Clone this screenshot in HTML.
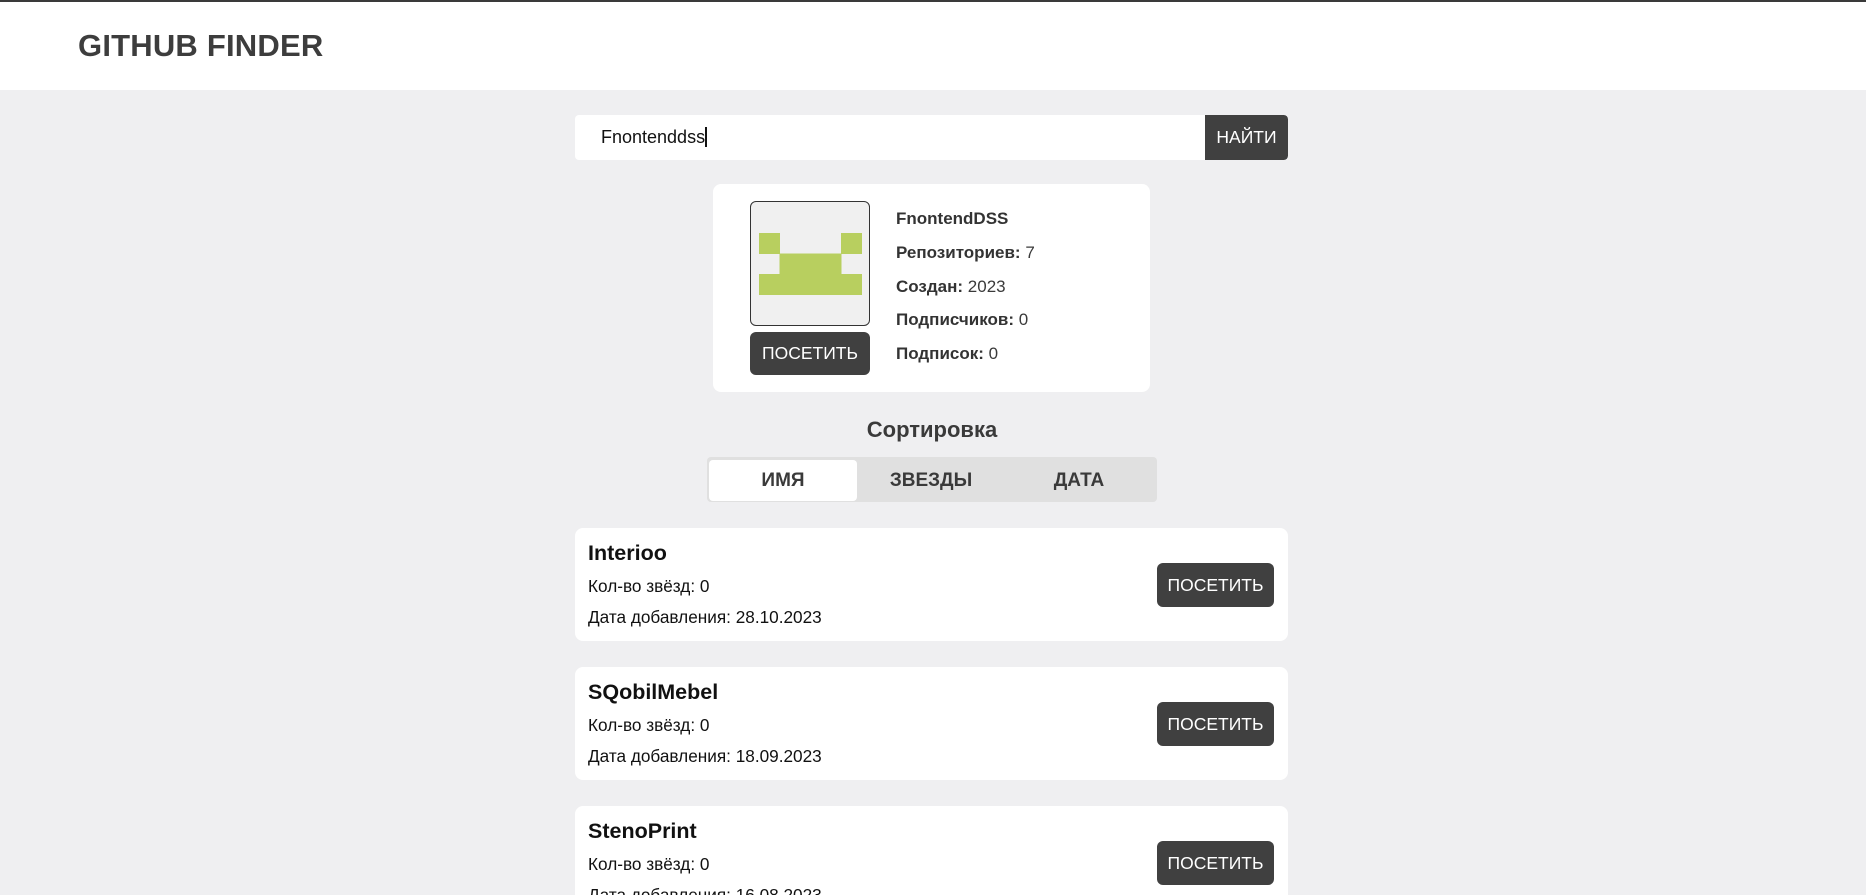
<!DOCTYPE html>
<html style="overflow:hidden;height:895px"><head><meta charset="utf-8"><style>
*{box-sizing:border-box;margin:0;padding:0}
body{width:1866px;height:895px;overflow:hidden;background:#efeff1;font-family:"Liberation Sans",Arial,sans-serif;color:#111;position:relative}
.hdr{position:absolute;left:0;top:0;width:1866px;height:90px;background:#fff;border-top:2px solid #3a3a3a}
.hdr h1{position:absolute;left:78px;top:26px;font-size:31px;font-weight:bold;color:#3d3d3d;letter-spacing:0.2px}
.abs{position:absolute}
.search{left:575px;top:115px;width:713px;height:45px;background:#fff;border-radius:4px;overflow:hidden}
.search .t{position:absolute;left:26px;top:12px;font-size:18px;color:#111}
.search .cur{display:inline-block;width:2px;height:20px;background:#111;vertical-align:-4px}
.search .b{position:absolute;right:0;top:0;width:83px;height:45px;background:#404040;color:#fff;font-size:17.5px;text-align:center;line-height:45px;border-radius:0 4px 4px 0}
.card{background:#fff;border-radius:8px}
.btn{background:#404040;color:#fff;border-radius:6px;text-align:center;font-size:17.5px}
.info{font-size:17px;color:#3a3a3a;position:absolute;left:896px}
.info b{color:#333}
.tabs{left:707px;top:457px;width:450px;height:45px;background:#e0e0e0;border-radius:4px}
.tab{position:absolute;top:3px;width:148px;height:41px;line-height:41px;text-align:center;font-weight:bold;font-size:19px;color:#3a3a3a}
.repo h2{position:absolute;left:13px;top:13px;font-size:21.5px;font-weight:bold;color:#111}
.repo .l{position:absolute;left:13px;font-size:17.2px;color:#111}
.repo .btn{position:absolute;left:582px;top:35px;width:117px;height:44px;line-height:44px}
</style></head><body>
<div class="hdr"><h1>GITHUB FINDER</h1></div>
<div class="abs search"><div class="t">Fnontenddss<span class="cur"></span></div><div class="b">НАЙТИ</div></div>
<div class="abs card" style="left:713px;top:184px;width:437px;height:208px"></div>
<div class="abs" style="left:750px;top:201px;width:120px;height:125px;border:1px solid #333;border-radius:6px;background:#f0f0f0;overflow:hidden">
<svg width="120" height="125" style="position:absolute;left:-1px;top:-1px"><g fill="#b8cf5f">
<rect x="9" y="32" width="21" height="21"/><rect x="91" y="32" width="21" height="21"/>
<rect x="29.5" y="52.5" width="62" height="21"/><rect x="9" y="73" width="103" height="21"/></g></svg></div>
<div class="abs btn" style="left:750px;top:332px;width:120px;height:43px;line-height:43px">ПОСЕТИТЬ</div>
<div class="info" style="top:209px"><b>FnontendDSS</b></div>
<div class="info" style="top:243px"><b>Репозиториев:</b> 7</div>
<div class="info" style="top:277px"><b>Создан:</b> 2023</div>
<div class="info" style="top:310px"><b>Подписчиков:</b> 0</div>
<div class="info" style="top:344px"><b>Подписок:</b> 0</div>
<div class="abs" style="left:707px;width:450px;top:417px;text-align:center;font-weight:bold;font-size:22px;color:#3a3a3a">Сортировка</div>
<div class="abs tabs">
<div class="tab" style="left:2px;background:#fff;border-radius:4px">ИМЯ</div>
<div class="tab" style="left:150px">ЗВЕЗДЫ</div>
<div class="tab" style="left:298px">ДАТА</div></div>
<div class="abs card repo" style="left:575px;top:528px;width:713px;height:113px"><h2>Interioo</h2><div class="l" style="top:48px">Кол-во звёзд: 0</div><div class="l" style="top:79px">Дата добавления: 28.10.2023</div><div class="btn">ПОСЕТИТЬ</div></div>
<div class="abs card repo" style="left:575px;top:667px;width:713px;height:113px"><h2>SQobilMebel</h2><div class="l" style="top:48px">Кол-во звёзд: 0</div><div class="l" style="top:79px">Дата добавления: 18.09.2023</div><div class="btn">ПОСЕТИТЬ</div></div>
<div class="abs" style="left:0;top:806px;width:1866px;height:89px;overflow:hidden">
<div class="abs card repo" style="left:575px;top:0;width:713px;height:113px"><h2>StenoPrint</h2><div class="l" style="top:48px">Кол-во звёзд: 0</div><div class="l" style="top:79px">Дата добавления: 16.08.2023</div><div class="btn">ПОСЕТИТЬ</div></div></div>
</body></html>
